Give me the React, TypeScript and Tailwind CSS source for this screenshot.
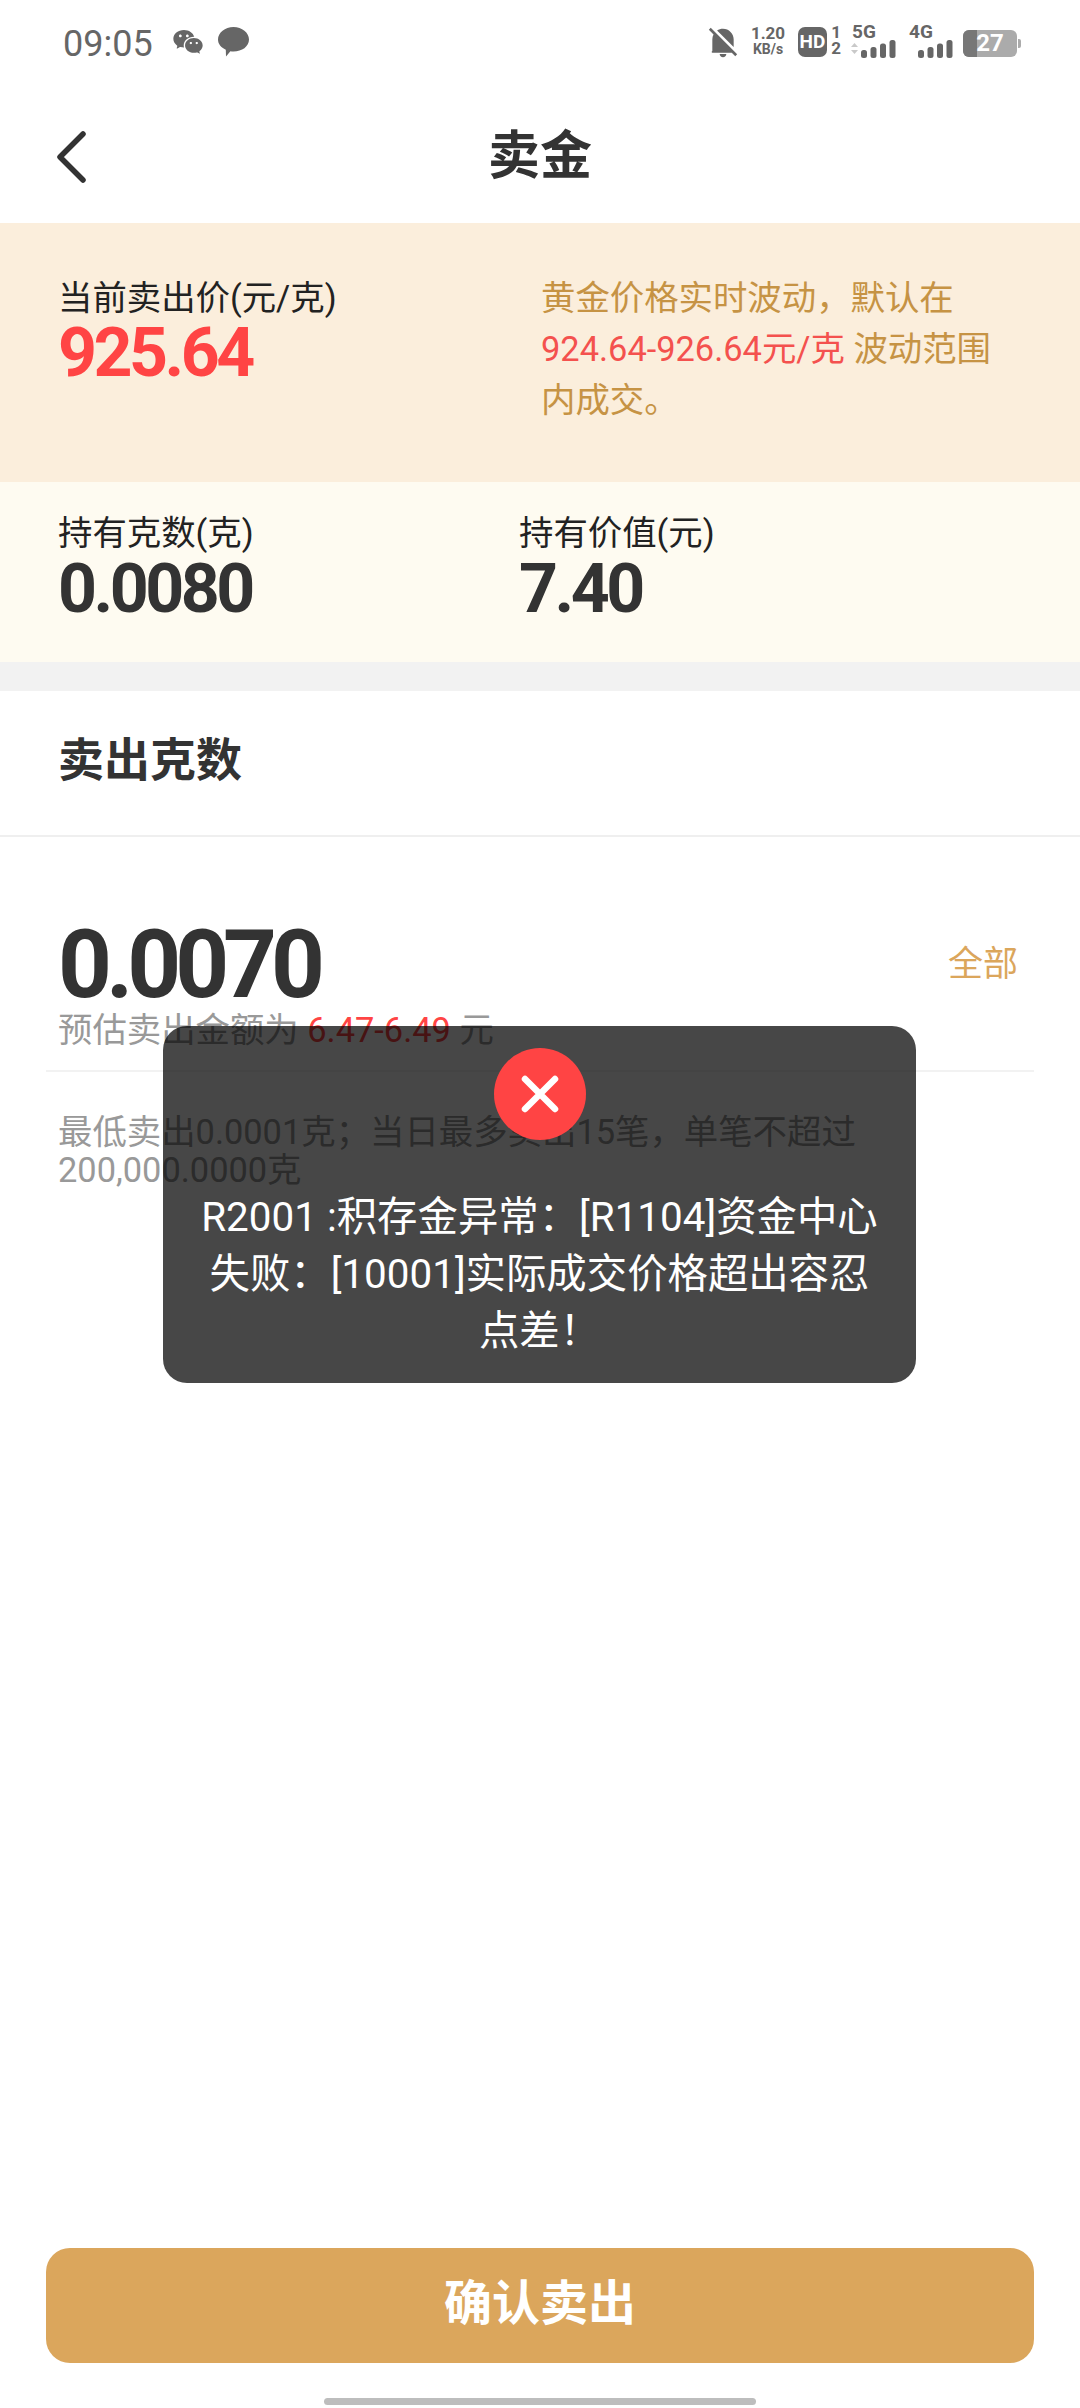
import { RiWechatFill, RiNotificationOffFill } from "react-icons/ri";

const SignalBars = ({ arrows }: { arrows?: boolean }) => (
    <svg width="46" height="18" viewBox="0 0 46 18" className="block">
        {arrows && <path d="M1 7 L4.5 3 L8 7 Z M1 10 L8 10 L4.5 14 Z" fill="#c9c9c9" />}
        <rect x="11" y="10" width="6" height="8" rx="2.5" fill="#666" />
        <rect x="20.5" y="7" width="6" height="11" rx="2.5" fill="#666" />
        <rect x="30" y="3.5" width="6" height="14.5" rx="2.5" fill="#666" />
        <rect x="39.5" y="0" width="6" height="18" rx="2.5" fill="#666" />
    </svg>
);

const StatusBar = () => (
    <div className="h-[89px] flex justify-between pl-[63px] pr-[59px] pt-[24px] text-[#666]">
        <div className="flex items-start">
            <span className="text-[36px] leading-[40px]">09:05</span>
            <RiWechatFill className="w-[32px] h-[32px] mt-[2px] ml-[19px] text-[#666]" />
            <svg width="31" height="30" viewBox="0 0 31 30" className="mt-[3px] ml-[14px]">
                <path d="M15.5 0 C24 0 31 5.6 31 12.6 C31 19.6 24 24.6 15.5 24.6 C14.4 24.6 13.4 24.5 12.4 24.3 L8 29.6 L7.8 22.8 C3 20.6 0 17 0 12.6 C0 5.6 7 0 15.5 0 Z" fill="#666" />
            </svg>
        </div>
        <div className="flex items-start">
            <RiNotificationOffFill className="w-[32px] h-[32px] mt-[2px]" />
            <div className="ml-[11px] w-[36px] flex flex-col items-center font-bold">
                <span className="text-[17px] leading-[18px]">1.20</span>
                <span className="text-[14px] leading-[15px]">KB/s</span>
            </div>
            <div className="ml-[12px] w-[29px] h-[30px] mt-[3px] rounded-[7px] bg-[#666] text-white text-[19px] font-bold leading-[30px] text-center">HD</div>
            <div className="ml-[5px] w-[8px] flex flex-col items-center text-[17px] font-bold leading-[16px]">
                <span>1</span>
                <span>2</span>
            </div>
            <div className="ml-[10px] flex flex-col">
                <span className="ml-[2px] text-[19px] leading-[16px] font-bold">5G</span>
                <SignalBars arrows />
            </div>
            <div className="ml-[11px] flex flex-col">
                <span className="ml-[2px] text-[19px] leading-[16px] font-bold">4G</span>
                <SignalBars />
            </div>
            {/* battery, dark part is the charge level */}
            <div className="ml-[10px] mt-[6px] flex items-center">
                <div className="relative w-[54px] h-[27px] rounded-[6px] bg-[#ababab] overflow-hidden">
                    <div className="absolute left-0 top-0 bottom-0 w-[14px] bg-[#777]" />
                    <span className="relative block text-center text-white text-[24px] font-bold leading-[27px]">27</span>
                </div>
                <div className="w-[3px] h-[9px] ml-[1px] rounded-r-[2px] bg-[#ababab]" />
            </div>
        </div>
    </div>
);

const App = () => {
    return (
        <div className="relative w-[1080px] h-[2408px] flex flex-col bg-white overflow-hidden font-[Roboto,'Noto_Sans_CJK_SC',sans-serif] text-[#333]">
            <StatusBar />

            {/* nav bar */}
            <div className="relative h-[134px] pt-[2px] flex items-center justify-center">
                <svg width="34" height="56" viewBox="0 0 34 56" className="absolute left-[55px] top-[40px]">
                    <path d="M28 5 L5 28 L28 51" fill="none" stroke="#333" strokeWidth="5.5" strokeLinecap="round" strokeLinejoin="round" />
                </svg>
                <h1 className="text-[52px] font-bold">卖金</h1>
            </div>

            {/* current price */}
            <div className="h-[259px] bg-[#fbeedc] flex">
                <div className="w-[541px] pl-[58px] pt-[53px]">
                    <p className="text-[34.4px] leading-[44px] text-[#222]">当前卖出价(元/克)</p>
                    <p className="pt-[1px] text-[68px] leading-[64px] tracking-[-3.5px] font-bold text-[#ff4444]">925.64</p>
                </div>
                <p className="w-[480px] pt-[50px] text-[34.4px] leading-[51px] text-[#c69344]">
                    黄金价格实时波动，默认在<br />
                    <span className="text-[#f4514e]">924.64-926.64元/克</span> 波动范围<br />
                    内成交。
                </p>
            </div>

            {/* holdings */}
            <div className="h-[180px] bg-[#fefbf1] flex pt-[29px]">
                <div className="w-[519px] pl-[58px]">
                    <p className="text-[34.4px] leading-[44px] text-[#222]">持有克数(克)</p>
                    <p className="pt-[1px] text-[68px] leading-[66px] tracking-[-3.5px] font-bold">0.0080</p>
                </div>
                <div>
                    <p className="text-[34.4px] leading-[44px] text-[#222]">持有价值(元)</p>
                    <p className="pt-[1px] text-[68px] leading-[66px] tracking-[-3.5px] font-bold">7.40</p>
                </div>
            </div>

            <div className="h-[29px] bg-[#f2f2f2]" />

            <div className="h-[146px] pl-[58px] pt-[39px] border-b-2 border-[#efefef]">
                <h2 className="text-[46px] leading-[60px] font-bold">卖出克数</h2>
            </div>

            {/* amount input */}
            <div className="mx-[46px] px-[12px] pt-[83px] pb-[20px] border-b-2 border-[#f2f2f2]">
                <div className="flex items-center justify-between pr-[4px]">
                    <span className="text-[94px] leading-[90px] tracking-[-6px] font-bold">0.0070</span>
                    <span className="text-[35px] text-[#dba65c]">全部</span>
                </div>
                <p className="text-[34.4px] leading-[40px] text-[#999]">
                    预估卖出金额为 <span className="text-[#ff4444]">6.47-6.49</span> 元
                </p>
            </div>

            <p className="px-[58px] pt-[41px] text-[34.4px] leading-[38px] text-[#999]">
                最低卖出0.0001克；当日最多卖出15笔，单笔不超过200,000.0000克
            </p>

            <div className="flex-1" />

            <button className="mx-[46px] h-[115px] pb-[4px] rounded-[24px] bg-[#dba65c] text-white text-[48px] font-bold" type="button">确认卖出</button>
            <div className="mt-[35px] mb-[3px] mx-auto w-[432px] h-[7px] rounded-full bg-[#bdbdbd]" />

            {/* error toast */}
            <div className="absolute left-[163px] top-[1026px] w-[753px] h-[357px] rounded-[24px] bg-black/72 flex flex-col items-center pt-[22px] px-[34px]">
                <div className="w-[92px] h-[92px] rounded-full bg-[#ff4444] flex items-center justify-center">
                    <svg width="38" height="38" viewBox="0 0 38 38">
                        <path d="M4 4 L34 34 M34 4 L4 34" stroke="#fff" strokeWidth="6.5" strokeLinecap="round" />
                    </svg>
                </div>
                <p className="mt-[49px] text-[40.4px] leading-[57px] text-white text-center">
                    R2001 :积存金异常：[R1104]资金中心失败：[10001]实际成交价格超出容忍点差！
                </p>
            </div>
        </div>
    );
};

export default App;
